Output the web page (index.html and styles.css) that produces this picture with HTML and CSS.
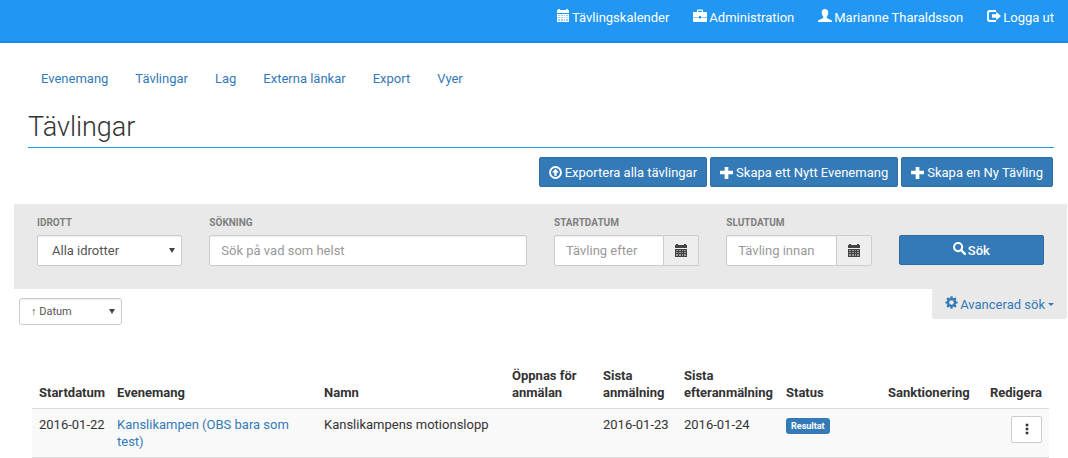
FILE: index.html
```html
<!DOCTYPE html>
<html lang="sv">
<head>
<meta charset="utf-8">
<meta name="viewport" content="width=device-width, initial-scale=1">
<title>Tävlingar</title>
<link rel="stylesheet" href="styles.css">
</head>
<body>
<svg class="sprite" aria-hidden="true">
  <symbol id="i-calendar" viewBox="0 0 14 14">
    <path d="M1 5h12v8H1z" fill-opacity=".5"/>
    <path fill-rule="evenodd" d="M1 1h1V0h2v1h6V0h2v1h1v3H1zM1 5h12v8H1zM2 6v1h2V6zM5 6v1h2V6zM8 6v1h1V6zM10 6v1h2V6zM2 8v1h2V8zM5 8v1h2V8zM8 8v1h1V8zM10 8v1h2V8zM2 10v2h2v-2zM5 10v2h2v-2zM8 10v2h1v-2zM10 10v2h2v-2z"/>
  </symbol>
  <symbol id="i-case" viewBox="0 0 14 14">
    <path fill-rule="evenodd" d="M4 3V1.600Q4 .5 5.100 .5h3.800Q10 .5 10 1.600V3h3.200q.8 0 .8.8V8H8V7H6v1H0V3.800Q0 3 .8 3zM5.200 3h3.600V1.700H5.200zM0 8.500h6v1h2v-1h6v3.700q0 .8-.8.8H.8q-.8 0-.8-.8z"/>
  </symbol>
  <symbol id="i-user" viewBox="0 0 14 14">
    <path d="M7 0c2 0 3.300 1.300 3.300 3.300 0 1.900-.7 3.400-1.500 4.200v1.400c1.200.8 3.500 1.500 4.500 2.200.5.400.7 1 .7 1.900H0c0-.9.200-1.500.7-1.900 1-.7 3.300-1.400 4.500-2.200V7.500C4.400 6.700 3.700 5.200 3.700 3.300 3.700 1.300 5 0 7 0z"/>
  </symbol>
  <symbol id="i-logout" viewBox="0 0 14 14">
    <path d="M9 1H3Q0 1 0 4v6q0 3 3 3h6v-2H3.300Q2 11 2 9.700V4.300Q2 3 3.300 3H9zM9.200 2.800 14 7 9.200 11.200V8.700H5V5.300h4.200z"/>
  </symbol>
  <symbol id="i-upload" viewBox="0 0 14 14">
    <circle cx="7" cy="7" r="5.900" fill="none" stroke="currentColor" stroke-width="2"/>
    <path d="M7 3l3.700 4H8.300v3.500H5.700V7H3.300z"/>
  </symbol>
  <symbol id="i-plus" viewBox="0 0 14 14">
    <path d="M5 1h4v4h5v4H9v5H5V9H0V5h5z"/>
  </symbol>
  <symbol id="i-search" viewBox="0 0 14 14">
    <circle cx="5.500" cy="5.500" r="4.400" fill="none" stroke="currentColor" stroke-width="2.200"/>
    <path d="M8.600 8.600l4.200 4.200" stroke="currentColor" stroke-width="2.600" stroke-linecap="round"/>
  </symbol>
  <symbol id="i-cog" viewBox="0 0 14 14">
    <circle cx="7" cy="7" r="3.800" fill="none" stroke="currentColor" stroke-width="2.600"/>
    <path d="M7 .4v2.600M7 11v2.600M.4 7H3M11 7h2.600M2.300 2.300l1.900 1.900M9.800 9.800l1.900 1.900M2.300 11.700l1.900-1.900M9.800 4.200l1.900-1.900" stroke="currentColor" stroke-width="2.400"/>
  </symbol>
  <symbol id="i-more" viewBox="0 0 4 12">
    <path d="M.7.700h2.600v2.600H.7zM.7 4.700h2.600v2.600H.7zM.7 8.700h2.600v2.600H.7z"/>
  </symbol>
</svg>

<header class="topbar">
  <nav class="topnav" aria-label="Konto">
    <a href="#"><svg class="icon"><use href="#i-calendar"/></svg>Tävlingskalender</a>
    <a href="#"><svg class="icon"><use href="#i-case"/></svg>Administration</a>
    <a href="#"><svg class="icon"><use href="#i-user"/></svg>Marianne Tharaldsson</a>
    <a href="#"><svg class="icon"><use href="#i-logout"/></svg>Logga ut</a>
  </nav>
</header>

<nav class="menu" aria-label="Huvudmeny">
  <a href="#">Evenemang</a>
  <a href="#">Tävlingar</a>
  <a href="#">Lag</a>
  <a href="#">Externa länkar</a>
  <a href="#">Export</a>
  <a href="#">Vyer</a>
</nav>

<main>
  <div class="heading">
    <h1>Tävlingar</h1>
    <div class="actions">
      <button type="button" class="btn"><svg class="icon"><use href="#i-upload"/></svg>Exportera alla tävlingar</button>
      <button type="button" class="btn"><svg class="icon"><use href="#i-plus"/></svg>Skapa ett Nytt Evenemang</button>
      <button type="button" class="btn"><svg class="icon"><use href="#i-plus"/></svg>Skapa en Ny Tävling</button>
    </div>
  </div>

  <form class="filter">
    <div class="field">
      <label for="sport">Idrott</label>
      <div class="select">
        <select id="sport"><option>Alla idrotter</option></select>
        <span class="arrow" aria-hidden="true"></span>
      </div>
    </div>
    <div class="field double">
      <label for="query">Sökning</label>
      <input id="query" type="text" placeholder="Sök på vad som helst">
    </div>
    <div class="field">
      <label for="start">Startdatum</label>
      <div class="group">
        <input id="start" type="text" placeholder="Tävling efter">
        <button type="button" class="addon" aria-label="Välj startdatum"><svg class="icon"><use href="#i-calendar"/></svg></button>
      </div>
    </div>
    <div class="field">
      <label for="end">Slutdatum</label>
      <div class="group">
        <input id="end" type="text" placeholder="Tävling innan">
        <button type="button" class="addon" aria-label="Välj slutdatum"><svg class="icon"><use href="#i-calendar"/></svg></button>
      </div>
    </div>
    <button type="submit" class="btn search"><svg class="icon"><use href="#i-search"/></svg>Sök</button>
  </form>

  <div class="below">
    <div class="select sort">
      <select aria-label="Sortering"><option>↑ Datum</option></select>
      <span class="arrow" aria-hidden="true"></span>
    </div>
    <a href="#" class="advanced"><svg class="icon"><use href="#i-cog"/></svg>Avancerad sök<span class="caret"></span></a>
  </div>

  <div class="results">
    <table>
      <colgroup>
        <col class="c-start"><col class="c-event"><col><col class="c-open"><col class="c-last"><col class="c-late"><col class="c-status"><col class="c-sanction"><col class="c-edit">
      </colgroup>
      <thead>
        <tr>
          <th scope="col">Startdatum</th>
          <th scope="col">Evenemang</th>
          <th scope="col">Namn</th>
          <th scope="col">Öppnas för anmälan</th>
          <th scope="col">Sista anmälning</th>
          <th scope="col">Sista efteranmälning</th>
          <th scope="col">Status</th>
          <th scope="col">Sanktionering</th>
          <th scope="col" class="end">Redigera</th>
        </tr>
      </thead>
      <tbody>
        <tr>
          <td class="date">2016-01-22</td>
          <td class="event"><a href="#">Kanslikampen (OBS bara som test)</a></td>
          <td>Kanslikampens motionslopp</td>
          <td class="date"></td>
          <td class="date">2016-01-23</td>
          <td class="date">2016-01-24</td>
          <td><span class="badge">Resultat</span></td>
          <td></td>
          <td class="end"><button type="button" class="more" aria-label="Redigera"><svg><use href="#i-more"/></svg></button></td>
        </tr>
      </tbody>
    </table>
  </div>
</main>
</body>
</html>
```

FILE: styles.css
```css
* { box-sizing: border-box; }

body {
  margin: 0;
  background: #fff;
  color: #333;
  font: 13px/17px Roboto, "Liberation Sans", sans-serif;
}

a { color: #337ab7; text-decoration: none; }

button, input, select { margin: 0; font: inherit; }

.sprite { position: absolute; width: 0; height: 0; }

.icon { flex: none; width: 14px; height: 14px; fill: currentColor; }

.topbar {
  height: 43px;
  padding: 9px 14px 0;
  background: #2196f3;
  border-bottom: 2px solid #1a88e6;
}

.topnav { display: flex; justify-content: flex-end; gap: 24px; }

.topnav a { display: flex; gap: 2px; color: #fff; }

.menu { display: flex; gap: 27px; padding: 27px 41px 0; }

.heading { padding: 23px 14px 0 28px; }

h1 {
  margin: 0;
  padding-bottom: 2px;
  border-bottom: 1px solid #2196f3;
  font-size: 27px;
  font-weight: 300;
  line-height: 35px;
}

.actions {
  display: flex;
  justify-content: flex-end;
  gap: 3px;
  padding: 9px 1px 17px 0;
}

.btn {
  display: flex;
  align-items: center;
  justify-content: center;
  gap: 2px;
  height: 30px;
  padding: 0 9px;
  background: #337ab7;
  border: 1px solid #2e6da4;
  border-radius: 2px;
  color: #fff;
}

.btn .icon { width: 13px; height: 13px; }

.filter {
  display: grid;
  grid-template-columns: repeat(6, minmax(0, 1fr));
  gap: 27px;
  align-items: end;
  margin: 0 1px 0 14px;
  padding: 10px 23px 23px;
  background: #e9e9e9;
}

.double { grid-column: span 2; }

.actions .btn { gap: 3px; }

.field label {
  display: block;
  margin-bottom: 4px;
  color: #808080;
  font-size: 10px;
  font-weight: 700;
  text-transform: uppercase;
}

.field input, .select select {
  width: 100%;
  height: 31px;
  padding: 0 11px;
  background: #fff;
  border: 1px solid #ccc;
  border-radius: 2px;
  box-shadow: inset 0 1px 1px rgba(0, 0, 0, .075);
  color: #555;
}

.field input::placeholder { color: #999; opacity: 1; }

.select { position: relative; }

.select select { appearance: none; padding: 0 14px; }

.arrow {
  position: absolute;
  top: 50%;
  right: 7px;
  margin-top: -3px;
  border: solid transparent;
  border-width: 5px 3px 0;
  border-top-color: #444;
  pointer-events: none;
}

.group { display: flex; }

.group input { flex: 1; min-width: 0; border-radius: 2px 0 0 2px; }

.addon {
  display: flex;
  align-items: center;
  justify-content: center;
  width: 35px;
  padding: 0;
  background: #eee;
  border: 1px solid #ccc;
  border-left: 0;
  border-radius: 0 2px 2px 0;
  color: #444;
}

.search { margin-bottom: 1px; font-weight: 500; }

.search .icon, .advanced .icon { margin-bottom: 3px; }

.below {
  display: flex;
  align-items: flex-start;
  justify-content: space-between;
  padding: 0 1px 0 19px;
}

.sort { width: 103px; margin-top: 9px; }

.sort select {
  height: 27px;
  padding: 0 11px;
  border-radius: 3px;
  font-size: 11px;
}

.advanced {
  display: flex;
  align-items: center;
  gap: 2px;
  height: 30px;
  padding: 0 13px;
  background: #e9e9e9;
  border-radius: 0 0 3px 3px;
}

.advanced .icon { width: 13px; height: 13px; }

.caret {
  margin-left: 1px;
  border: solid transparent;
  border-width: 3px 3px 0;
  border-top-color: currentColor;
}

.results { padding: 35px 19px 0 32px; }

table { width: 100%; border-collapse: collapse; table-layout: fixed; }

th, td { padding: 7px; text-align: left; vertical-align: top; }

th { vertical-align: bottom; font-weight: 700; }

tbody tr {
  background: #f9f9f9;
  border-top: 1px solid #ddd;
  border-bottom: 1px solid #ddd;
}

.c-start { width: 78px; }
.c-event { width: 207px; }
.c-open { width: 91px; }
.c-last { width: 81px; }
.c-late, .c-status { width: 102px; }
.c-sanction { width: 104px; }
.c-edit { width: 64px; }

.date { padding-right: 0; white-space: nowrap; }

.event { padding-right: 27px; }

.end { padding-left: 0; text-align: right; }

.badge {
  display: inline-block;
  padding: 0 5px;
  background: #337ab7;
  border-radius: 3px;
  color: #fff;
  font-size: 9px;
  font-weight: 700;
  line-height: 16px;
}

.more {
  display: inline-flex;
  align-items: center;
  justify-content: center;
  width: 31px;
  height: 27px;
  padding: 0 0 2px;
  background: #fff;
  border: 1px solid #ccc;
  border-radius: 2px;
  color: #333;
  vertical-align: top;
}

.more svg { width: 4px; height: 12px; fill: currentColor; }
```
